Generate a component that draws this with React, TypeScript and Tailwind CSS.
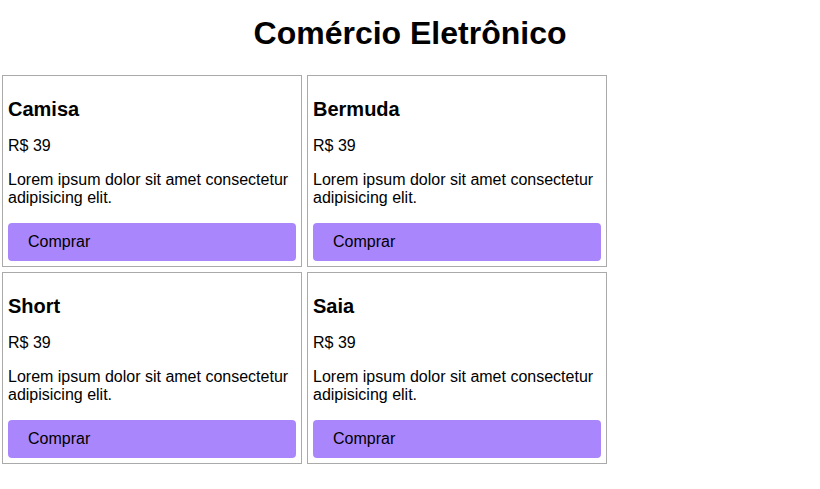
const PRODUTOS = [
  { nome: 'Camisa', preco: 39 },
  { nome: 'Bermuda', preco: 39 },
  { nome: 'Short', preco: 39 },
  { nome: 'Saia', preco: 39 },
];

const ProdutoCard = ({ nome, preco }: { nome: string; preco: number }) => (
  <div className="border border-[#aaaaaa] p-[5px]">
    <h3 className="mt-4 text-[20px] font-bold leading-[24px]">{nome}</h3>
    <p className="mt-4 leading-[normal]">R$ {preco}</p>
    <p className="mt-4 leading-[normal]">Lorem ipsum dolor sit amet consectetur adipisicing elit.</p>
    <button className="mt-4 w-full rounded-[4px] bg-[#a986fc] py-[10px] pl-5 text-left leading-[normal] text-black">
      Comprar
    </button>
  </div>
);

export default function App() {
  return (
    <div className="min-h-screen bg-white text-black" style={{ fontFamily: '"Liberation Sans", Arial, sans-serif' }}>
      <h1 className="pt-[15px] text-center text-[32px] font-bold leading-[normal]">Comércio Eletrônico</h1>
      <div className="ml-[2px] mt-[23px] grid grid-cols-[300px_300px] gap-[5px]">
        {PRODUTOS.map((p) => (
          <ProdutoCard key={p.nome} nome={p.nome} preco={p.preco} />
        ))}
      </div>
    </div>
  );
}
